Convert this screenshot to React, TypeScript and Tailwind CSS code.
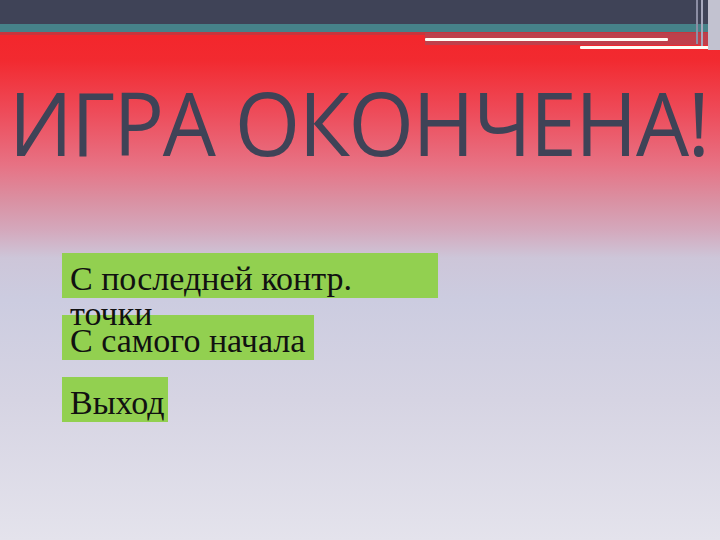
import React from 'react';

const serif = { fontFamily: '"Liberation Serif", "DejaVu Serif", serif' };

const MenuButton: React.FC<{ label: React.ReactNode; width: string }> = ({ label, width }) => (
  <div className={`h-[45px] bg-[#92d050] pl-2 ${width}`}>
    <p className="relative z-10 pt-[8px] text-[34px] leading-[35px] text-[#111] whitespace-nowrap" style={serif}>
      {label}
    </p>
  </div>
);

// thin stripes in the upper right corner of the slide
const CornerStrokes: React.FC = () => (
  <svg className="absolute left-0 top-0" width="720" height="52" viewBox="0 0 720 52">
    <rect x="425" y="33" width="295" height="12" fill="#b34652" opacity="0.8" />
    <rect x="425" y="38" width="243" height="3" rx="1" fill="#fffdf5" />
    <rect x="580" y="46" width="132" height="3" rx="1" fill="#fffdf5" />
    <rect x="696" y="0" width="2" height="44" fill="#8c8ea4" />
    <rect x="701" y="0" width="2" height="46" fill="#a6a8bc" />
    <rect x="708" y="0" width="12" height="50" fill="#c2c2d0" />
  </svg>
);

export default function App() {
  return (
    <div className="relative w-[720px] h-[540px] overflow-hidden bg-[linear-gradient(to_bottom,#f52226_0px,#f22a30_60px,#ee4a58_110px,#e77284_165px,#da90a2_200px,#d4a8bc_230px,#cdc6d9_258px,#cccce0_300px,#d6d4e3_400px,#e4e3ec_540px)]">
      <div className="h-[24px] bg-[#3f4357]" />
      <div className="h-[8px] bg-[#468289]" />
      <div className="h-[3px] bg-[#c8353c]" />
      <CornerStrokes />

      <h1
        className="mt-[37px] pl-[9px] text-[87px] font-medium leading-[100px] text-[#3f4357] whitespace-nowrap tracking-[-1.5px] origin-left scale-x-[0.967]"
        style={{ fontFamily: '"Open Sans", "DejaVu Sans", sans-serif' }}
      >
        ИГРА ОКОНЧЕНА!
      </h1>

      <div className="mt-[81px] ml-[62px] flex flex-col gap-[17px]">
        <MenuButton
          label={
            <>
              С последней контр.
              <br />
              точки
            </>
          }
          width="w-[376px]"
        />
        <MenuButton label="С самого начала" width="w-[252px]" />
        <MenuButton label="Выход" width="w-[106px]" />
      </div>
    </div>
  );
}
